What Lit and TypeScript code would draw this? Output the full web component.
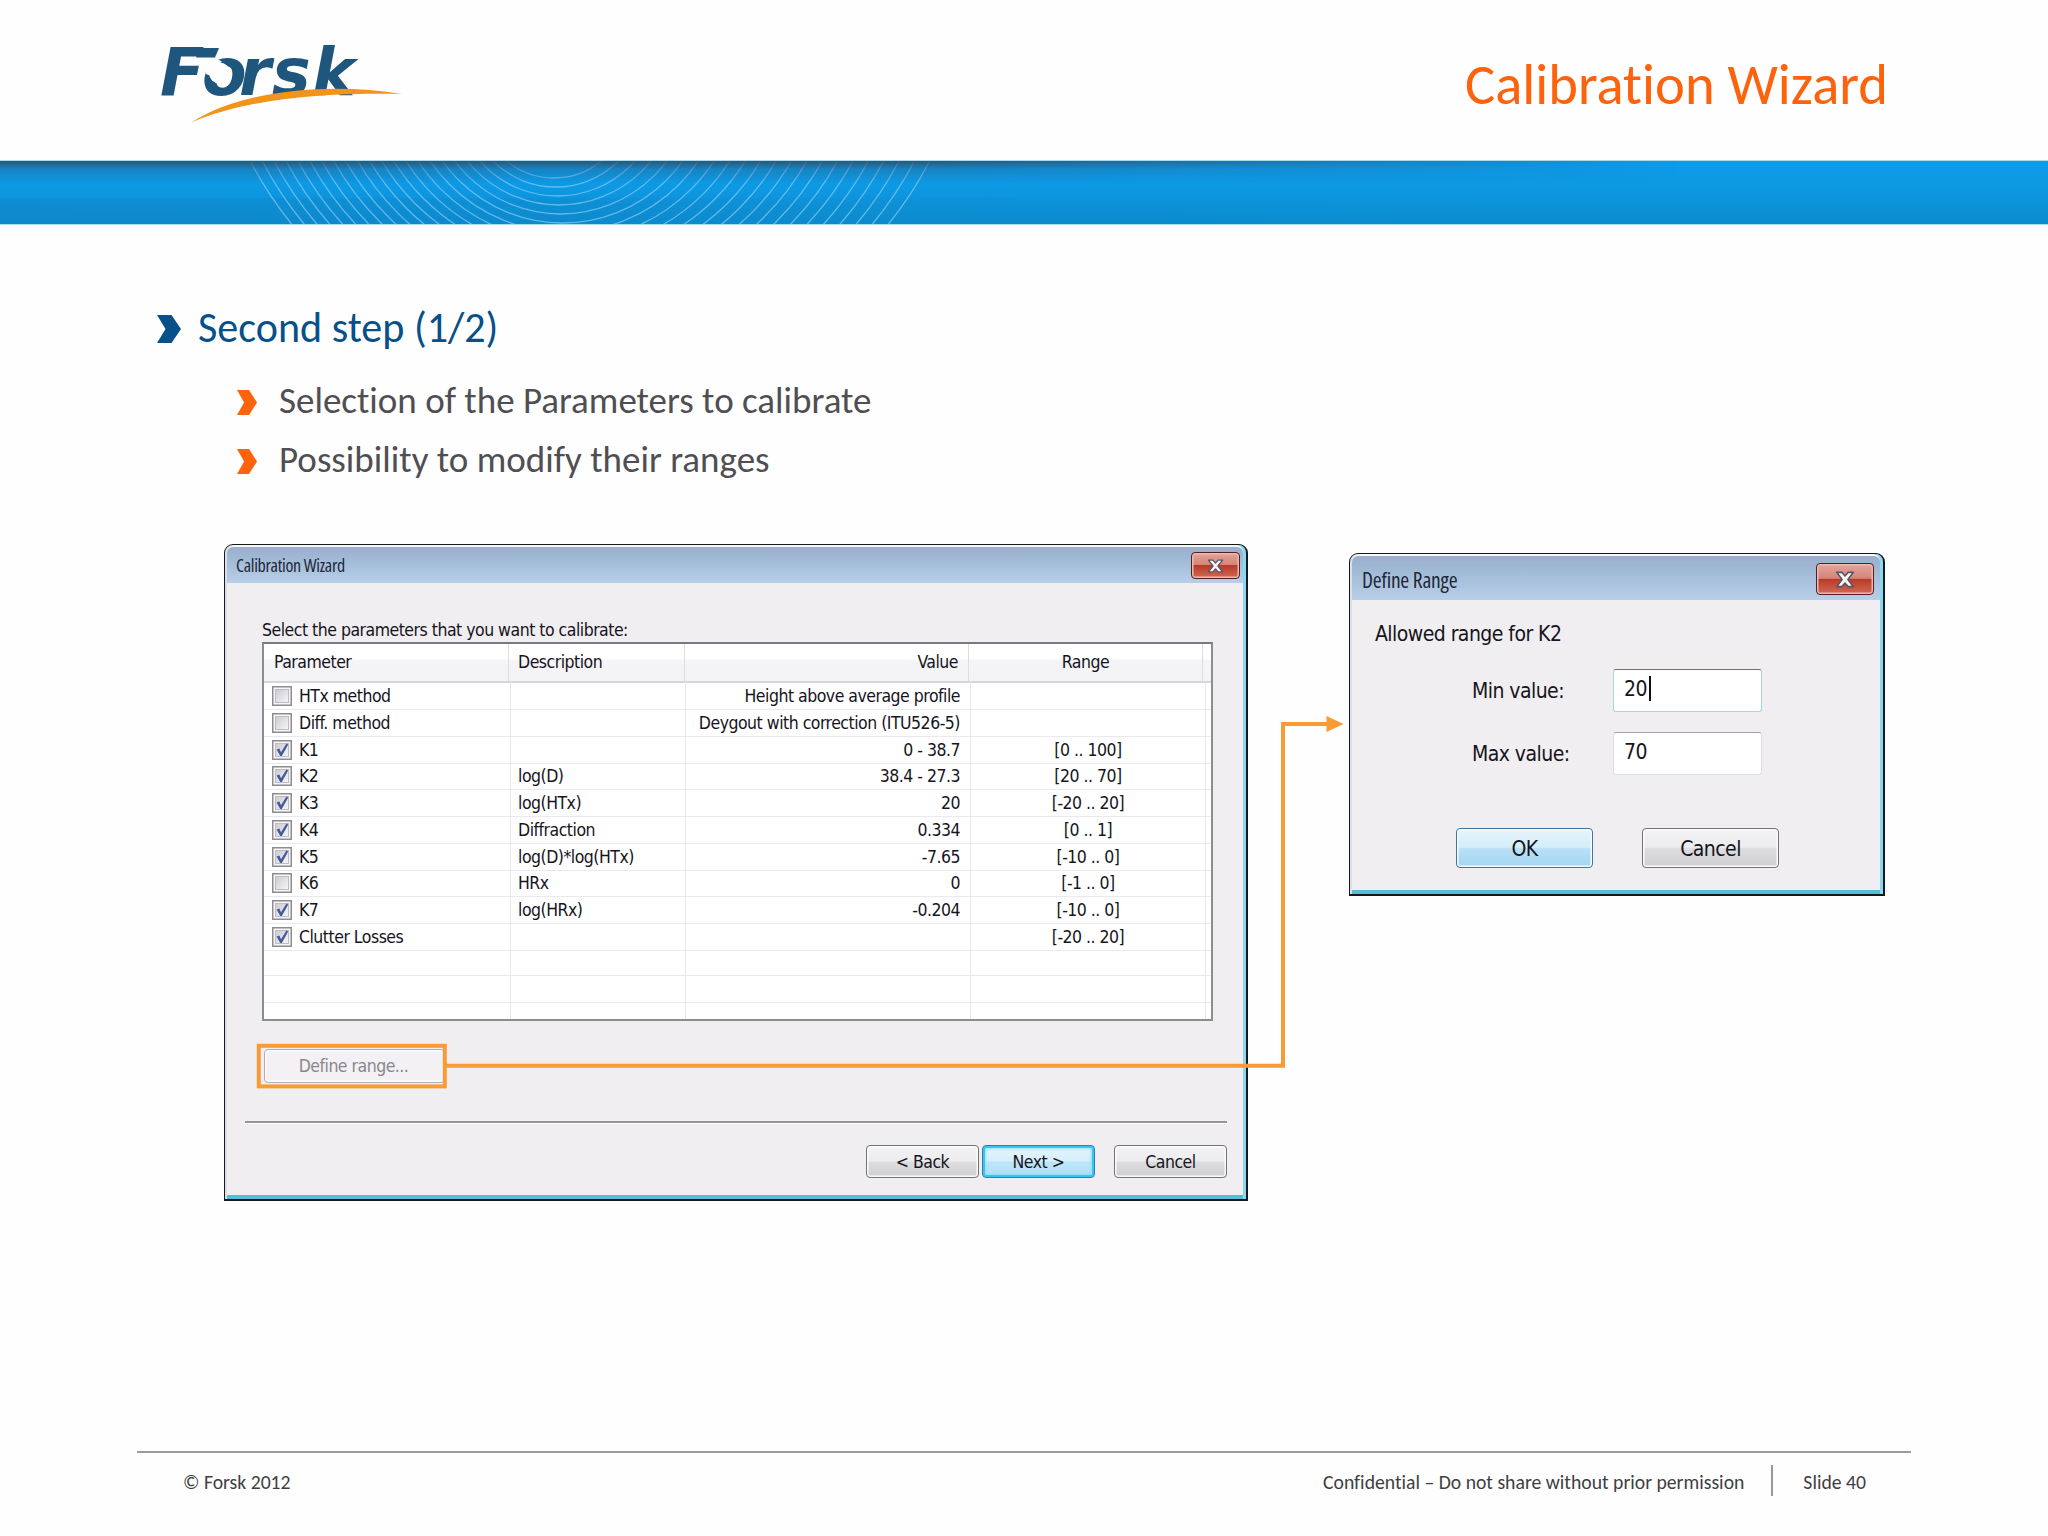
import { LitElement, html, svg, css, nothing } from "lit";
import { customElement } from "lit/decorators.js";
import { classMap } from "lit/directives/class-map.js";

interface Row {
  on?: boolean;
  name: string;
  desc?: string;
  value?: string;
  range?: string;
}

const ROWS: Row[] = [
  { on: false, name: "HTx method", value: "Height above average profile" },
  { on: false, name: "Diff. method", value: "Deygout with correction (ITU526-5)" },
  { on: true, name: "K1", value: "0 - 38.7", range: "[0 .. 100]" },
  { on: true, name: "K2", desc: "log(D)", value: "38.4 - 27.3", range: "[20 .. 70]" },
  { on: true, name: "K3", desc: "log(HTx)", value: "20", range: "[-20 .. 20]" },
  { on: true, name: "K4", desc: "Diffraction", value: "0.334", range: "[0 .. 1]" },
  { on: true, name: "K5", desc: "log(D)*log(HTx)", value: "-7.65", range: "[-10 .. 0]" },
  { on: false, name: "K6", desc: "HRx", value: "0", range: "[-1 .. 0]" },
  { on: true, name: "K7", desc: "log(HRx)", value: "-0.204", range: "[-10 .. 0]" },
  { on: true, name: "Clutter Losses", range: "[-20 .. 20]" },
  { name: "" },
  { name: "" },
  { name: "" },
];

const ARCS = Array.from({ length: 22 }, (_, i) => {
  const t = i / 21;
  return { cx: 554 + 36 * t, cy: -57 - 120 * t, r: 74 + 309 * t };
});

@customElement("app-root")
export class AppRoot extends LitElement {
  static styles = css`
    :host {
      display: block;
      width: 2048px;
      height: 1536px;
      background: #fefefe;
      font-family: Carlito, Lato, "Open Sans", sans-serif;
      font-variant-ligatures: none;
      overflow: hidden;
    }
    * { box-sizing: border-box; }
    .slide {
      position: relative;
      height: 1536px;
      display: flex;
      flex-direction: column;
    }
    .head {
      height: 160px;
      padding: 0 160px 0 150px;
      display: flex;
      justify-content: space-between;
      align-items: flex-start;
    }
    .logo { margin-top: 36px; display: block; }
    .logo text {
      font: italic 700 65px "DejaVu Sans", sans-serif;
      fill: #1f567e;
    }
    .title {
      margin: 50px 0 0;
      line-height: 70px;
      font-weight: 400;
      font-size: 56.6px;
      color: #fd620d;
    }
    .band {
      height: 65px;
      border-top: 1px solid #a9dcec;
      border-bottom: 1px solid #a9dcec;
      background:
        linear-gradient(90deg, rgba(16, 130, 196, 0.4), rgba(16, 130, 196, 0) 1500px) 0 100% / 100% 26px no-repeat,
        linear-gradient(180deg, #0e9bea, #0d98e2 45%, #0b8ccf);
      position: relative;
    }
    .shade {
      position: absolute;
      left: 0;
      right: 0;
      top: 0;
      height: 22px;
      background: linear-gradient(180deg, rgba(50, 74, 98, 0.85), rgba(40, 90, 130, 0.35) 38%, rgba(20, 120, 180, 0));
      -webkit-mask-image: linear-gradient(90deg, #000 45%, transparent 82%);
      mask-image: linear-gradient(90deg, #000 45%, transparent 82%);
    }
    .arcs { position: absolute; left: 0; top: 0; }
    .main { flex: 1; padding-top: 78px; }
    .bullet { display: flex; align-items: flex-start; }
    .bullet svg { display: block; }
    .b1 { padding-left: 157px; color: #07508a; font-size: 42.1px; line-height: 50px; gap: 17px; }
    .b1 svg { margin-top: 12px; }
    .b2 { padding-left: 237px; color: #504e53; font-size: 37px; line-height: 44px; gap: 22px; }
    .b2 svg { margin-top: 11px; }
    .first { margin-top: 26px; }
    .second { margin-top: 15px; }
    .windows {
      margin-top: 62px;
      padding-left: 224px;
      display: flex;
      align-items: flex-start;
      gap: 101px;
      font-family: "DejaVu Sans Condensed", "DejaVu Sans", sans-serif;
      font-stretch: 75%;
      color: #16141c;
    }
    .win {
      border: 1px solid #15181c;
      border-width: 1px 2px 2px 1px;
      border-radius: 9px 9px 0 0;
      background: #f0eef1;
      box-shadow: inset 2px 0 #dcdeea, inset -3px 0 #8ad9f2, inset 0 -4px #54bfd4, inset 0 3px #f6f8fb;
      padding: 2px 3px 0 2px;
    }
    .wizard { width: 1024px; height: 657px; font-size: 17.5px; letter-spacing: -0.5px; line-height: 20px; }
    .range { width: 536px; height: 343px; margin-top: 9px; font-size: 21px; letter-spacing: -0.55px; line-height: 26px; }
    .bar {
      display: flex;
      justify-content: space-between;
      align-items: flex-start;
      background: linear-gradient(180deg, #9caecd, #9fb9d5 30%, #b9cee8);
      border-radius: 6px 6px 0 0;
      font-family: "Open Sans", "Noto Sans", sans-serif;
      color: #1d2737;
    }
    .wizard .bar { height: 36px; padding: 5px 3px 0 9px; font-size: 18px; letter-spacing: -0.3px; line-height: 26px; }
    .range .bar { height: 44px; padding: 6px 6px 0 10px; font-size: 21.5px; letter-spacing: -0.2px; line-height: 36px; }
    .close {
      display: flex;
      align-items: center;
      justify-content: center;
      border: 1px solid #551f24;
      border-radius: 4px;
      box-shadow: inset 0 0 0 1.5px #eab9b0;
      background: linear-gradient(180deg, #e3a59b, #d58478 48%, #b93a26 50%, #cf6a55);
    }
    .wizard .close { width: 49px; height: 27px; margin-top: 0; }
    .range .close { width: 58px; height: 32px; margin-top: 1px; }
    .wbody { padding: 37px 0 0 35px; }
    .prompt { height: 22px; }
    .list {
      width: 951px;
      height: 379px;
      border: 2px solid #8d8c91;
      border-top-color: #7b7a80;
      background: #fff;
      overflow: hidden;
    }
    .row {
      display: grid;
      grid-template-columns: 247px 175px 285px 235px 1fr;
      height: 26.75px;
    }
    .cell {
      border-right: 1px solid #e9e7ee;
      border-bottom: 1px solid #ebe9f0;
      padding-top: 1px;
      line-height: 26px;
      white-space: pre;
    }
    .row .cell:last-child { border-right: 0; }
    .hrow { height: 38px; grid-template-columns: 245px 176px 284px 234px 1fr; background: linear-gradient(180deg, #fff 40%, #f5f4f7 42%, #f3f2f5); }
    .hrow .cell { border-right-color: #dddce1; border-bottom: 2px solid #d6d5da; line-height: 37px; padding-top: 0; }
    .c1 { padding-left: 8px; display: flex; align-items: center; gap: 7px; }
    .hrow .c1 { padding-left: 10px; }
    .c2 { padding-left: 7px; }
    .hrow .c2 { padding-left: 9px; }
    .c3 { text-align: right; padding-right: 10px; }
    .c4 { text-align: center; }
    .box { display: block; flex: none; }
    .btn {
      display: flex;
      align-items: center;
      justify-content: center;
      border: 1.5px solid #737278;
      border-radius: 4px;
      box-shadow: inset 0 0 0 1.5px #fbfbfc;
      background: linear-gradient(180deg, #f3f2f4, #ecebed 48%, #dddcdf 52%, #d0cfd2);
    }
    .define { width: 181px; height: 34px; margin: 28px 0 0 2px; padding-right: 2px; border-color: #adb0b5; background: #f3f1f4; color: #89878c; }
    .rule { width: 982px; margin: 38px 0 0 -17px; height: 3px; background: #96959a; border-bottom: 1px solid #fff; }
    .actions { display: flex; width: 982px; margin: 21px 0 0 -17px; justify-content: flex-end; }
    .actions .btn { width: 113px; height: 33px; }
    .actions .next { margin: 0 19px 0 3px; }
    .next {
      border-color: #2f7fa8;
      box-shadow: inset 0 0 0 2px #35c6f2, inset 0 0 3px 3px #8fe0f8;
      background: linear-gradient(180deg, #e6f5fc, #d5effb 48%, #bde5f8 52%, #b0e0f6);
    }
    .rbody { padding: 21px 0 0 23px; }
    .field { display: flex; align-items: center; }
    .field .lab { width: 238px; padding-left: 97px; }
    .input {
      width: 149px;
      height: 43px;
      padding: 7px 0 0 10px;
      background: #fff;
      border: 1.5px solid #dedde3;
      border-top-color: #a4a3a9;
      border-radius: 3px;
      display: flex;
      align-items: flex-start;
      line-height: 24px;
    }
    .input.focus { border-color: #a9d1ec; border-top-color: #477aa8; }
    .caret { width: 2px; height: 25px; background: #111; margin-left: 2px; margin-top: -1px; }
    .f1 { margin-top: 22px; }
    .f2 { margin-top: 20px; }
    .rbtns { display: flex; gap: 49px; margin: 53px 0 0 81px; }
    .rbtns .btn { width: 137px; height: 40px; padding-top: 1px; }
    .rbtns .ok {
      border-color: #3b769c;
      background: linear-gradient(180deg, #e7f5fc, #d3edfa 48%, #b9e0f5 52%, #a3d6f3);
    }
    .link { position: absolute; left: 0; top: 0; pointer-events: none; }
    .foot {
      height: 85px;
      margin: 0 137px;
      border-top: 2px solid #9b9a9e;
      padding: 14px 45px 0 46px;
      display: flex;
      align-items: flex-start;
      font-size: 19.7px;
      line-height: 30px;
      color: #403e43;
    }
    .grow { flex: 1; }
    .vline { width: 2px; height: 31px; background: #99989c; margin: -2px 30px 0 27px; }
  `;

  private chevron(w: number, h: number, fill: string) {
    return html`<svg width=${w} height=${h} viewBox="0 0 24 28" preserveAspectRatio="none">
      <path fill=${fill} d="M0 0H14.5L24 14L14.5 28H0L8.5 14Z" />
    </svg>`;
  }

  private close(w: number, h: number) {
    return html`<svg width=${w} height=${h} viewBox="0 0 18 15" preserveAspectRatio="none">
      <path
        d="M1.5 1.2H6.2L9 4.4L11.8 1.2H16.5L11.6 7.5L16.5 13.8H11.8L9 10.6L6.2 13.8H1.5L6.4 7.5Z"
        fill="#f7f7f8" stroke="#5b5563" stroke-width="1.4" stroke-linejoin="round" />
    </svg>`;
  }

  private checkbox(on: boolean) {
    return html`<svg class="box" width="20" height="20" viewBox="0 0 20 20">
      <defs>
        <linearGradient id="g" x1="0" y1="0" x2="1" y2="1">
          <stop offset="0" stop-color="#cbcbd0" />
          <stop offset="1" stop-color="#f7f7f9" />
        </linearGradient>
      </defs>
      <rect x="0.75" y="0.75" width="18.5" height="18.5" fill="#f6f6f7" stroke="#8d8c90" stroke-width="1.5" />
      <rect x="3.5" y="3.5" width="13" height="13" fill="url(#g)" stroke="#bcbcc2" />
      ${on
        ? svg`<path d="M4.6 9.6L7.4 8.6L9 12.2L14.4 3.6L16.2 4.4L9.8 16H8.2Z" fill="#46599d" />`
        : nothing}
    </svg>`;
  }

  private row(r: Row) {
    return html`<div class="row">
      <div class="cell c1">${r.on === undefined ? nothing : this.checkbox(r.on)}<span>${r.name}</span></div>
      <div class="cell c2">${r.desc ?? ""}</div>
      <div class="cell c3">${r.value ?? ""}</div>
      <div class="cell c4">${r.range ?? ""}</div>
      <div class="cell"></div>
    </div>`;
  }

  private field(label: string, value: string, focus: boolean, cls: string) {
    return html`<div class="field ${cls}">
      <span class="lab">${label}</span>
      <div class=${classMap({ input: true, focus })}>${value}${focus ? html`<i class="caret"></i>` : nothing}</div>
    </div>`;
  }

  render() {
    return html`<div class="slide">
      <header class="head">
        <svg class="logo" width="260" height="100" viewBox="150 36 260 100">
          <text x="160 202 239 272 312" y="95">Forsk</text>
          <path d="M200 48H219L215 57.5H196Z" fill="#1f567e" />
          <path d="M206 59H217L222 61.5Q213 68 211 76L206 74Z" fill="#fefefe" />
          <circle cx="219.5" cy="73" r="10.5" fill="#fefefe" />
          <path d="M191.5 122.5C240 90 330 82 402 94C330 93 250 97 191.5 122.5Z" fill="#f0941b" />
        </svg>
        <h1 class="title">Calibration Wizard</h1>
      </header>
      <div class="band">
        <svg class="arcs" width="1000" height="63" viewBox="0 0 1000 63">
          ${ARCS.map((a) => svg`<circle cx=${a.cx} cy=${a.cy} r=${a.r} fill="none" stroke="#8fd0f6" stroke-opacity="0.65" stroke-width="1.3" />`)}
        </svg>
        <div class="shade"></div>
      </div>
      <main class="main">
        <div class="bullet b1">${this.chevron(24, 28, "#07508a")}<span>Second step (1/2)</span></div>
        <div class="bullet b2 first">${this.chevron(20, 25, "#fd620d")}<span>Selection of the Parameters to calibrate</span></div>
        <div class="bullet b2 second">${this.chevron(20, 25, "#fd620d")}<span>Possibility to modify their ranges</span></div>
        <div class="windows">
          <section class="win wizard">
            <div class="bar"><span>Calibration Wizard</span><div class="close">${this.close(17, 14)}</div></div>
            <div class="wbody">
              <div class="prompt">Select the parameters that you want to calibrate:</div>
              <div class="list">
                <div class="row hrow">
                  <div class="cell c1">Parameter</div>
                  <div class="cell c2">Description</div>
                  <div class="cell c3">Value</div>
                  <div class="cell c4">Range</div>
                  <div class="cell"></div>
                </div>
                ${ROWS.map((r) => this.row(r))}
              </div>
              <div class="btn define">Define range...</div>
              <div class="rule"></div>
              <div class="actions">
                <div class="btn">&lt; Back</div>
                <div class="btn next">Next &gt;</div>
                <div class="btn">Cancel</div>
              </div>
            </div>
          </section>
          <section class="win range">
            <div class="bar"><span>Define Range</span><div class="close">${this.close(20, 17)}</div></div>
            <div class="rbody">
              <div>Allowed range for K2</div>
              ${this.field("Min value:", "20", true, "f1")}
              ${this.field("Max value:", "70", false, "f2")}
              <div class="rbtns">
                <div class="btn ok">OK</div>
                <div class="btn">Cancel</div>
              </div>
            </div>
          </section>
        </div>
      </main>
      <footer class="foot">
        <span>© Forsk 2012</span>
        <span class="grow"></span>
        <span>Confidential – Do not share without prior permission</span>
        <i class="vline"></i>
        <span>Slide 40</span>
      </footer>
      <svg class="link" width="2048" height="1536" viewBox="0 0 2048 1536" fill="none">
        <rect x="258.8" y="1045.8" width="186" height="40.6" stroke="#fa9a35" stroke-width="4" />
        <path d="M446 1065.8H1283V724H1328" stroke="#fa9a35" stroke-width="4" />
        <path d="M1326.5 716L1343.5 724L1326.5 732Z" fill="#fa9a35" />
      </svg>
    </div>`;
  }
}
